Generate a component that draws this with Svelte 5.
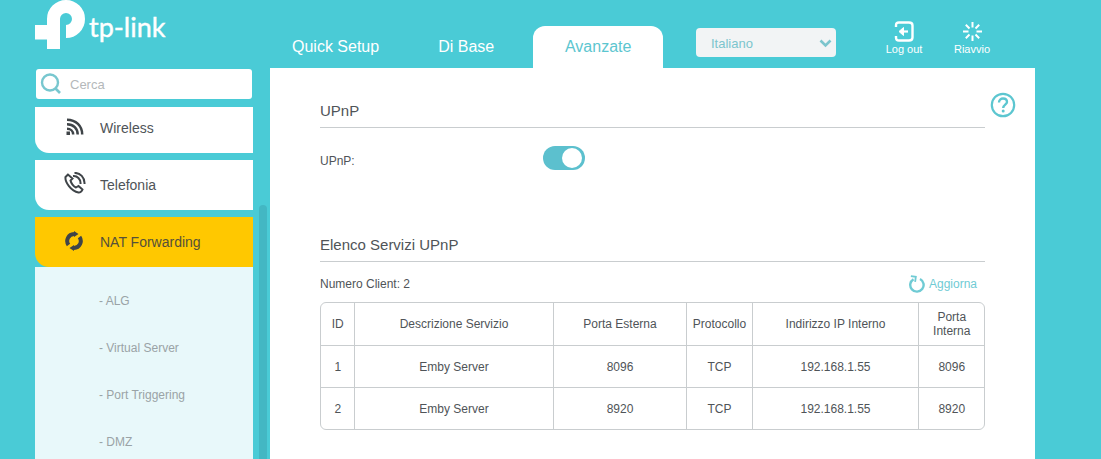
<script>
  const tabs = [
    { label: "Quick Setup" },
    { label: "Di Base" },
    { label: "Avanzate", active: true }
  ];

  const subItems = ["ALG", "Virtual Server", "Port Triggering", "DMZ"];

  const services = [
    { id: 1, name: "Emby Server", ext: 8096, proto: "TCP", ip: "192.168.1.55", int: 8096 },
    { id: 2, name: "Emby Server", ext: 8920, proto: "TCP", ip: "192.168.1.55", int: 8920 }
  ];
</script>

<div class="page">
  <header>
    <div class="logo">
      <svg width="150" height="50" viewBox="0 0 150 50">
        <rect x="0" y="25" width="25" height="14.500" fill="#fff" />
        <path d="M18.500 49V19A12.500 12.500 0 1 1 31 31.500" fill="none" stroke="#fff" stroke-width="13" />
        <text x="54" y="37" class="logo-text">tp-link</text>
      </svg>
    </div>
    <nav>
      {#each tabs as tab}
        <div class="tab" class:active={tab.active}>{tab.label}</div>
      {/each}
    </nav>
    <div class="lang">
      <span>Italiano</span>
      <svg width="13" height="9" viewBox="0 0 13 9"><path d="M1.500 1.500L6.500 6.500L11.500 1.500" fill="none" stroke="#7cc5cd" stroke-width="2.600" /></svg>
    </div>
    <div class="actions">
      <div class="action">
        <svg width="20" height="21" viewBox="0 0 20 21" fill="none" stroke="#fff" stroke-width="2.400">
          <path d="M2 6V4.500C2 2.500 3 1.500 5 1.500H15C17.500 1.500 18.500 2.500 18.500 4.500V16.500C18.500 18.500 17.500 19.500 15 19.500H5C3 19.500 2 18.500 2 16.500V15" />
          <path d="M9.500 6.500L5 10.500L9.500 14.500Z" fill="#fff" stroke-width="1" />
          <path d="M9 10.500H14" stroke-width="2.200" />
        </svg>
        <span>Log out</span>
      </div>
      <div class="action">
        <svg width="21" height="21" viewBox="0 0 21 21" fill="none" stroke="#fff" stroke-width="2">
          <path d="M10.500 1V6.500M10.500 14.500V20M1 10.500H6.500M14.500 10.500H20M3.800 3.800L7.500 7.500M17.200 3.800L13.500 7.500M3.800 17.200L7.500 13.500M17.200 17.200L13.500 13.500" />
        </svg>
        <span>Riavvio</span>
      </div>
    </div>
  </header>

  <div class="main">
    <aside>
      <div class="search">
        <svg width="22" height="24" viewBox="0 0 22 24" fill="none" stroke="#78c7cf" stroke-width="2.400">
          <circle cx="10" cy="10.500" r="8" />
          <path d="M15.500 16.500L20 21" stroke-width="2.600" />
        </svg>
        <span>Cerca</span>
      </div>
      <div class="menu">
        <div class="item first">
          <svg class="icon" width="18" height="18" viewBox="0 0 18 18" fill="none" stroke="#3f4448" stroke-width="2.500">
            <path d="M1 1.800C10 1.800 16.200 8 16.200 16.500M1 6.300C7.500 6.300 11.700 10.500 11.700 16.500M1 10.800C4.500 10.800 7.200 13 7.200 16.500" />
            <rect x="0.500" y="13.500" width="3.500" height="3.500" fill="#3f4448" stroke="none" />
          </svg>
          <span>Wireless</span>
        </div>
        <div class="item">
          <svg class="icon" width="22" height="22" viewBox="0 0 22 22" fill="none" stroke="#3f4448" stroke-width="2">
            <path d="M4 2.500L1.500 5C0.800 10 7 19 14.500 20.500C16 20.800 18 19 18.500 17.500L14.500 14L12 15.500C9.500 14.500 7 11 6.500 8.500L8.500 6.500Z" />
            <path d="M9 4C13 3.500 17 7 16.500 12M10.500 1C16 .5 21 5.500 20.500 12" />
          </svg>
          <span>Telefonia</span>
        </div>
        <div class="item current">
          <svg class="icon" width="18" height="20" viewBox="0 0 18 20" fill="none" stroke="#3f4448" stroke-width="4">
            <path d="M3.500 14A7 7 0 0 1 9 3" />
            <path d="M14.500 6A7 7 0 0 1 9 17" />
            <path d="M9 0L13.500 3L9 6ZM9 14L4.500 17L9 20Z" fill="#3f4448" stroke="none" />
          </svg>
          <span>NAT Forwarding</span>
        </div>
        <ul>
          {#each subItems as sub}
            <li>- {sub}</li>
          {/each}
        </ul>
      </div>
      <div class="scrollbar"></div>
    </aside>

    <section class="content">
      <svg class="help" width="26" height="26" viewBox="0 0 26 26" fill="none" stroke="#5cc6d0">
        <circle cx="13" cy="13" r="11.200" stroke-width="2.200" />
        <path d="M9 10.500C9 8 11 6.500 13 6.500C15.500 6.500 17 8 17 10C17 12.500 13.200 13 13.200 16" stroke-width="2.400" />
        <circle cx="13.200" cy="19" r="1.500" fill="#5cc6d0" stroke="none" />
      </svg>

      <h2>UPnP</h2>
      <div class="field">
        <label for="upnp">UPnP:</label>
        <div id="upnp" class="toggle"><i></i></div>
      </div>

      <h2 class="second">Elenco Servizi UPnP</h2>
      <div class="tools">
        <span>Numero Client: 2</span>
        <div class="refresh">
          <svg width="16" height="18" viewBox="0 0 16 18" fill="none" stroke="#6fcbd4" stroke-width="2.400">
            <path d="M4.500 4.200A6.700 6.700 0 1 0 11 4" />
            <path d="M1.500 1.500H6.500V6.500" stroke-width="1.800" transform="rotate(8 4 4)" />
          </svg>
          <span>Aggiorna</span>
        </div>
      </div>

      <div class="table-wrap">
        <table>
          <colgroup>
            <col style="width: 33px" />
            <col style="width: 199px" />
            <col style="width: 133px" />
            <col style="width: 66px" />
            <col style="width: 166px" />
            <col />
          </colgroup>
          <thead>
            <tr>
              <th>ID</th>
              <th>Descrizione Servizio</th>
              <th>Porta Esterna</th>
              <th>Protocollo</th>
              <th>Indirizzo IP Interno</th>
              <th>Porta<br />Interna</th>
            </tr>
          </thead>
          <tbody>
            {#each services as row}
              <tr>
                <td>{row.id}</td>
                <td>{row.name}</td>
                <td>{row.ext}</td>
                <td>{row.proto}</td>
                <td>{row.ip}</td>
                <td>{row.int}</td>
              </tr>
            {/each}
          </tbody>
        </table>
      </div>
    </section>
  </div>
</div>

<style>
  :global(body) {
    background: #4acbd6;
    font-family: "Liberation Sans", Arial, sans-serif;
    color: #4f5458;
    overflow: hidden;
  }

  .page {
    width: 1000px;
    height: 459px;
    margin-left: 35px;
    overflow: hidden;
  }

  header {
    height: 68px;
    display: flex;
    align-items: flex-start;
  }

  .logo {
    width: 235px;
    height: 50px;
  }

  .logo-text {
    font-family: Lato, sans-serif;
    font-size: 27px;
    fill: #fff;
    stroke: #fff;
    stroke-width: 0.4px;
  }

  nav {
    display: flex;
    align-items: flex-end;
    height: 68px;
    width: 426px;
  }

  .tab {
    height: 42px;
    line-height: 42px;
    margin-top: 26px;
    padding: 0 22px;
    margin-right: 15px;
    font-size: 16px;
    color: #fff;
    text-align: center;
    box-sizing: border-box;
  }

  .tab.active {
    width: 130px;
    margin-left: 2px;
    background: #fff;
    color: #5cc6d0;
    border-radius: 12px 12px 0 0;
  }

  .lang {
    width: 140px;
    height: 29px;
    margin-top: 28px;
    padding: 2px 4px 0 15px;
    box-sizing: border-box;
    background: #f2f4f5;
    border-radius: 4px;
    display: flex;
    align-items: center;
    justify-content: space-between;
    font-size: 13px;
    color: #7cc5cd;
  }

  .actions {
    display: flex;
    margin-left: 34px;
    margin-top: 21px;
  }

  .action {
    width: 68px;
    display: flex;
    flex-direction: column;
    align-items: center;
    font-size: 11px;
    color: #fff;
    gap: 1px;
  }

  .main {
    display: flex;
    height: 391px;
  }

  aside {
    width: 235px;
    position: relative;
    overflow: hidden;
    flex: none;
  }

  .search {
    width: 216px;
    height: 30px;
    margin: 1px 0 8px 1px;
    background: #fff;
    border-radius: 3px;
    display: flex;
    align-items: center;
    box-sizing: border-box;
    padding-left: 4px;
    font-size: 13px;
    color: #b4b8ba;
    gap: 8px;
  }

  .menu {
    width: 218px;
  }

  .item {
    height: 50px;
    margin-bottom: 7px;
    background: #fff;
    border-bottom-left-radius: 14px;
    display: flex;
    align-items: center;
    font-size: 14px;
    color: #4f5458;
    box-sizing: border-box;
    position: relative;
    padding-left: 65px;
  }

  .item.first {
    height: 46px;
    padding-bottom: 4px;
  }

  .item.current {
    background: #ffc800;
    margin-bottom: 0;
    color: #55503a;
  }

  .icon {
    position: absolute;
    left: 29px;
    top: 12px;
  }

  .first .icon {
    left: 31px;
    top: 11px;
  }

  .current .icon {
    left: 30px;
    top: 14px;
  }

  ul {
    list-style: none;
    margin: 0;
    padding: 11px 0 0 0;
    background: #e8f8fa;
    height: 200px;
  }

  li {
    height: 47px;
    line-height: 47px;
    padding-left: 64px;
    font-size: 12px;
    color: #9aa3a6;
  }

  .scrollbar {
    position: absolute;
    left: 224px;
    top: 137px;
    width: 8px;
    height: 260px;
    background: #43b7c3;
    border-radius: 4px;
  }

  .content {
    width: 765px;
    background: #fff;
    box-sizing: border-box;
    padding: 33px 50px 0 50px;
    position: relative;
  }

  .help {
    position: absolute;
    right: 19px;
    top: 24px;
  }

  h2 {
    margin: 0;
    font-size: 15px;
    font-weight: 400;
    line-height: 20px;
    padding-bottom: 6px;
    border-bottom: 1px solid #c9cdcf;
    color: #4f5458;
  }

  h2.second {
    margin-top: 65px;
  }

  .field {
    display: flex;
    align-items: center;
    height: 24px;
    margin-top: 18px;
  }

  label {
    width: 223px;
    font-size: 12px;
    padding-top: 5px;
  }

  .toggle {
    width: 42px;
    height: 24px;
    border-radius: 12px;
    background: #5cc0ce;
    position: relative;
  }

  .toggle i {
    position: absolute;
    right: 3px;
    top: 2px;
    width: 20px;
    height: 20px;
    border-radius: 50%;
    background: #fff;
  }

  .tools {
    display: flex;
    justify-content: space-between;
    align-items: center;
    height: 24px;
    margin-top: 10px;
    margin-bottom: 6px;
    font-size: 12px;
  }

  .refresh {
    display: flex;
    align-items: center;
    gap: 4px;
    padding-right: 8px;
    color: #6fcbd4;
  }

  .table-wrap {
    border: 1px solid #c9cdcf;
    border-radius: 6px;
    overflow: hidden;
  }

  table {
    width: 100%;
    table-layout: fixed;
    border-collapse: collapse;
    font-size: 12px;
  }

  th, td {
    border-left: 1px solid #c9cdcf;
    border-top: 1px solid #c9cdcf;
    text-align: center;
    font-weight: 400;
    padding: 0 0 0 1px;
    height: 41px;
    color: #4f5458;
  }

  th {
    height: 42px;
    border-top: 0;
    line-height: 14px;
  }

  th:first-child, td:first-child {
    border-left: 0;
  }
</style>
